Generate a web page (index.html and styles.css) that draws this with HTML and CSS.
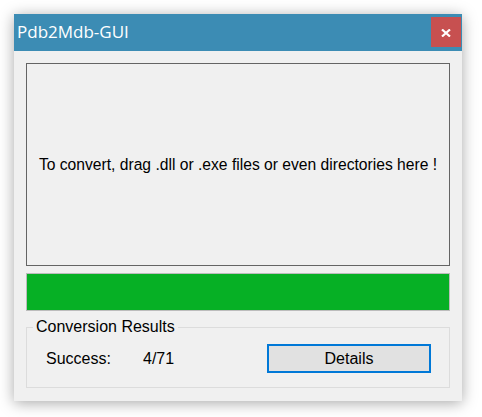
FILE: index.html
```html
<!DOCTYPE html>
<html>
<head>
  <title>Pdb2Mdb-GUI</title>
  <link rel="stylesheet" href="styles.css">
</head>
<body>
  <div class="window">
    <div class="titlebar">
      <span class="title">Pdb2Mdb-GUI</span>
      <button class="close" type="button" aria-label="Close">
        <svg width="10" height="8" viewBox="0 0 10 8">
          <path d="M1 0.5 L9 7.5 M9 0.5 L1 7.5" stroke="#fff" stroke-width="2.2" fill="none"/>
        </svg>
      </button>
    </div>
    <div class="content">
      <div class="drop-area">To convert, drag .dll or .exe files or even directories here !</div>
      <div class="progress"><div class="progress-fill" style="width: 100%"></div></div>
      <fieldset class="results">
        <legend>Conversion Results</legend>
        <div class="results-row">
          <span class="label">Success:</span>
          <span class="value">4/71</span>
          <button class="details" type="button">Details</button>
        </div>
      </fieldset>
    </div>
  </div>
</body>
</html>
```

FILE: styles.css
```css
html, body {
  margin: 0;
  padding: 0;
  background: #fff;
}
body {
  padding: 14px 0 16px 14px;
  font-family: "Liberation Sans", Arial, sans-serif;
  color: #000;
}
.window {
  width: 448px;
  height: 387px;
  background: #f0f0f0;
  box-shadow: 0 2px 14px rgba(0, 0, 0, 0.35);
}
.titlebar {
  height: 37px;
  background: #3c8cb4;
  display: flex;
  align-items: flex-start;
  justify-content: space-between;
}
.title {
  font-family: "Open Sans", "Noto Sans", sans-serif;
  font-size: 17px;
  color: #fff;
  padding: 7px 0 0 3px;
  line-height: 22px;
}
.close {
  width: 30px;
  height: 30px;
  margin: 3px 1px 0 0;
  border: none;
  background: #c75050;
  padding: 0;
  display: flex;
  align-items: center;
  justify-content: center;
}
.close svg {
  display: block;
  margin-top: 2px;
}
.content {
  padding: 12px 12px 0 12px;
}
.drop-area {
  height: 201px;
  border: 1px solid #646464;
  display: flex;
  align-items: center;
  justify-content: center;
  font-size: 15.65px;
}
.progress {
  margin-top: 7px;
  height: 36px;
  border: 1px solid #bcbcbc;
  background: #e6e6e6;
}
.progress-fill {
  height: 100%;
  background: #06b025;
}
.results {
  margin: 7px 0 0 0;
  padding: 8px 0 0 0;
  height: 60px;
  border: 1px solid #dcdcdc;
}
.results legend {
  font-size: 16px;
  line-height: 18px;
  padding: 0 3px;
  margin-left: 6px;
}
.results-row {
  display: flex;
  align-items: center;
}
.label {
  width: 97px;
  margin-left: 19px;
  font-size: 16px;
}
.value {
  font-size: 16px;
  width: 124px;
}
.details {
  width: 164px;
  height: 29px;
  border: 2px solid #0078d7;
  background: #e1e1e1;
  font-family: "Liberation Sans", Arial, sans-serif;
  font-size: 16px;
  color: #000;
  padding: 0;
}
```
